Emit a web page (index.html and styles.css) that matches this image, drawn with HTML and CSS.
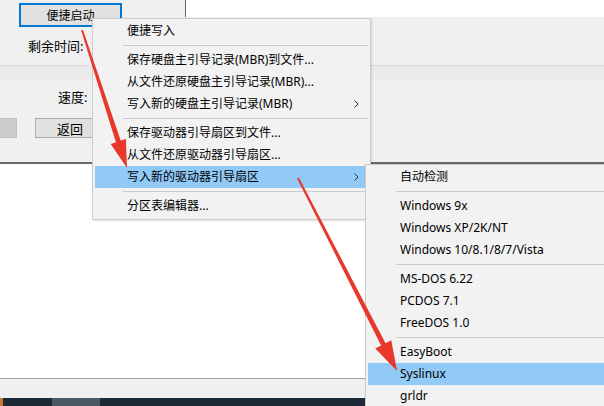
FILE: index.html
```html
<!DOCTYPE html>
<html lang="zh-CN">

<head>
    <meta charset="UTF-8">
    <title>便捷启动</title>
    <link rel="stylesheet" href="styles.css">
</head>

<body>
    <div class="dialog">
        <div class="top-row">
            <div class="top-left">
                <button class="btn btn-focus">便捷启动</button>
            </div>
            <div class="top-panel"></div>
        </div>
        <div class="label-row remain">剩余时间:</div>
        <div class="band"></div>
        <div class="label-row speed">速度:</div>
        <div class="btn-row">
            <button class="btn btn-off"></button>
            <button class="btn btn-back">返回</button>
        </div>
        <div class="log-area"></div>
        <div class="status-strip"></div>
        <div class="taskbar">
            <div class="task-start"></div>
            <div class="task-item"></div>
        </div>
    </div>

    <div class="menu menu-main">
        <div class="item">便捷写入</div>
        <div class="sep"></div>
        <div class="item">保存硬盘主引导记录(MBR)到文件...</div>
        <div class="item">从文件还原硬盘主引导记录(MBR)...</div>
        <div class="item has-sub">写入新的硬盘主引导记录(MBR)
            <svg class="chev" width="5" height="8" viewBox="0 0 5 8"><path d="M0.5 0.5 L4 4 L0.5 7.5" fill="none" stroke="#333" stroke-width="1"/></svg>
        </div>
        <div class="sep"></div>
        <div class="item">保存驱动器引导扇区到文件...</div>
        <div class="item">从文件还原驱动器引导扇区...</div>
        <div class="item has-sub active">写入新的驱动器引导扇区
            <svg class="chev" width="5" height="8" viewBox="0 0 5 8"><path d="M0.5 0.5 L4 4 L0.5 7.5" fill="none" stroke="#333" stroke-width="1"/></svg>
        </div>
        <div class="sep"></div>
        <div class="item">分区表编辑器...</div>
    </div>

    <div class="menu menu-sub">
        <div class="item">自动检测</div>
        <div class="sep"></div>
        <div class="item">Windows 9x</div>
        <div class="item">Windows XP/2K/NT</div>
        <div class="item">Windows 10/8.1/8/7/Vista</div>
        <div class="sep"></div>
        <div class="item">MS-DOS 6.22</div>
        <div class="item">PCDOS 7.1</div>
        <div class="item">FreeDOS 1.0</div>
        <div class="sep"></div>
        <div class="item">EasyBoot</div>
        <div class="item active">Syslinux</div>
        <div class="item">grldr</div>
    </div>

    <!-- red annotation arrows -->
    <svg class="marks" width="604" height="406" viewBox="0 0 604 406">
        <polygon fill="#e8372b" points="82.9,29.7 120.7,140.6 125.9,138.9 127,168 110.7,143.9 115.9,142.2 81.1,30.3"/>
        <polygon fill="#e8372b" points="298.9,177.5 385.5,343.2 391.3,340.2 397,371 375.3,348.4 381.1,345.4 297.1,178.5"/>
    </svg>
</body>

</html>
```

FILE: styles.css
```css
body {
    margin: 0;
    width: 604px;
    height: 406px;
    overflow: hidden;
    position: relative;
    background-color: #f0f0f0;
    font-family: 'Noto Sans', 'Noto Sans CJK SC', sans-serif;
    font-size: 12px;
    color: #000;
}

.dialog {
    display: flex;
    flex-direction: column;
    height: 406px;
}

.top-row {
    display: flex;
    align-items: flex-start;
    height: 27px;
}

.top-left {
    width: 185px;
    padding-top: 3px;
}

.top-panel {
    flex: 1;
    height: 17px;
    background-color: #fff;
    border-left: 1px solid #646464;
}

.btn {
    font-family: inherit;
    font-size: 12px;
    padding: 0;
    background-color: #e1e1e1;
    border: 1px solid #adadad;
    color: #000;
}

.btn-focus {
    margin-left: 19px;
    width: 103px;
    height: 24px;
    border: 2px solid #0078d7;
}

.label-row {
    height: 16px;
    line-height: 16px;
}

.remain {
    margin-top: 11px;
    padding-left: 28px;
    font-size: 13px;
}

.band {
    margin-top: 11px;
    height: 14px;
    background-color: #ebebeb;
    border-top: 1px solid #d9d9d9;
}

.speed {
    margin-top: 9px;
    padding-left: 58px;
    font-size: 13px;
}

.btn-row {
    display: flex;
    gap: 18px;
    margin-top: 13px;
    height: 20px;
}

.btn-off {
    width: 17px;
    height: 20px;
    background-color: #cccccc;
    border-color: #bfbfbf;
    border-left: 0;
}

.btn-back {
    width: 70px;
    height: 20px;
    font-size: 13px;
}

.log-area {
    margin-top: 24px;
    height: 214px;
    background-color: #fff;
    border-top: 2px solid #6a6a6a;
    border-bottom: 1px solid #a0a0a0;
}

.status-strip {
    height: 19px;
}

.taskbar {
    flex: 1;
    display: flex;
    background-color: #1c2a38;
}

.task-start {
    width: 3px;
    background-color: #c47a2c;
}

.task-item {
    margin-left: 49px;
    width: 48px;
    background-color: #4b5964;
}

.menu {
    position: absolute;
    background-color: #f2f2f2;
    border: 1px solid #cccccc;
    padding: 1px 2px 2px;
    box-shadow: 1px 1px 2px rgba(0, 0, 0, 0.12);
}

.menu-main {
    left: 92px;
    top: 18px;
    width: 273px;
}

.menu-sub {
    left: 365px;
    top: 164px;
    width: 240px;
}

.item {
    position: relative;
    height: 22px;
    line-height: 22px;
    padding-left: 32px;
    white-space: nowrap;
}

.item.active {
    background-color: #91c9f7;
}

.chev {
    position: absolute;
    right: 9px;
    top: 7px;
}

.sep {
    height: 7px;
    margin-left: 28px;
    display: flex;
    align-items: center;
}

.sep::after {
    content: '';
    flex: 1;
    height: 1px;
    background-color: #cccccc;
}

.marks {
    position: absolute;
    left: 0;
    top: 0;
    pointer-events: none;
}
```
